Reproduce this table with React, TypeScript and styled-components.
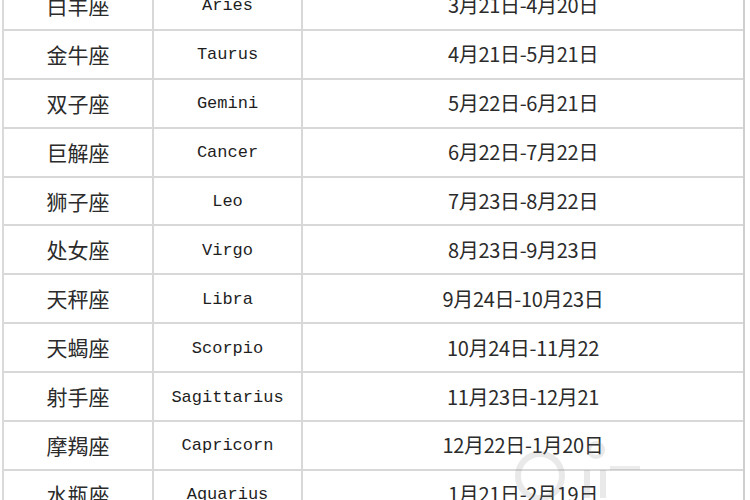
import styled, { createGlobalStyle } from "styled-components";

type Sign = {
  cn: string;
  en: string;
  dates: string;
};

const signs: Sign[] = [
  { cn: "白羊座", en: "Aries", dates: "3月21日-4月20日" },
  { cn: "金牛座", en: "Taurus", dates: "4月21日-5月21日" },
  { cn: "双子座", en: "Gemini", dates: "5月22日-6月21日" },
  { cn: "巨解座", en: "Cancer", dates: "6月22日-7月22日" },
  { cn: "狮子座", en: "Leo", dates: "7月23日-8月22日" },
  { cn: "处女座", en: "Virgo", dates: "8月23日-9月23日" },
  { cn: "天秤座", en: "Libra", dates: "9月24日-10月23日" },
  { cn: "天蝎座", en: "Scorpio", dates: "10月24日-11月22" },
  { cn: "射手座", en: "Sagittarius", dates: "11月23日-12月21" },
  { cn: "摩羯座", en: "Capricorn", dates: "12月22日-1月20日" },
  { cn: "水瓶座", en: "Aquarius", dates: "1月21日-2月19日" },
  { cn: "双鱼座", en: "Pisces", dates: "2月20日-3月20日" },
];

const GlobalStyle = createGlobalStyle`
  html, body {
    margin: 0;
    padding: 0;
    background: #ffffff;
    overflow: hidden;
  }
`;

const Page = styled.div`
  position: relative;
  width: 750px;
  height: 500px;
  overflow: hidden;
  background: #ffffff;
  padding-left: 2px;
  box-sizing: border-box;
`;

const Table = styled.div`
  margin-top: -18px;
  width: 743px;
  box-sizing: border-box;
  border-left: 2px solid #dadada;
  border-right: 2px solid #cfcfcf;
  display: flex;
  flex-direction: column;
`;

const Row = styled.div`
  display: grid;
  grid-template-columns: 150px 149px 1fr;
  height: 48.9px;
  box-sizing: border-box;
  border-bottom: 2px solid #d8d8d8;
`;

const Cell = styled.div<{ $kind: "cn" | "en" | "date"; $last?: boolean }>`
  display: flex;
  align-items: center;
  justify-content: center;
  box-sizing: border-box;
  border-right: ${(p) => (p.$last ? "none" : "2px solid #d8d8d8")};
  color: ${(p) => (p.$kind === "en" ? "#1e1e1e" : "#2b2b2b")};
  white-space: nowrap;
  font-family: ${(p) =>
    p.$kind === "en"
      ? '"Liberation Mono", "DejaVu Sans Mono", monospace'
      : '"Noto Sans CJK SC", "Noto Sans", sans-serif'};
  font-size: ${(p) => (p.$kind === "en" ? "17px" : p.$kind === "cn" ? "21px" : "20px")};
  letter-spacing: ${(p) => (p.$kind === "date" ? "-0.3px" : "0")};
  padding-top: ${(p) => (p.$kind === "en" ? "2px" : "0")};
  padding-bottom: 1px;
`;

const Watermark = styled.svg`
  position: absolute;
  left: 500px;
  top: 436px;
  width: 150px;
  height: 64px;
  opacity: 0.18;
  pointer-events: none;
`;

export default function App() {
  return (
    <>
      <GlobalStyle />
      <Page>
        <Table>
          {signs.map((s) => (
            <Row key={s.en}>
              <Cell $kind="cn">{s.cn}</Cell>
              <Cell $kind="en">{s.en}</Cell>
              <Cell $kind="date" $last>
                {s.dates}
              </Cell>
            </Row>
          ))}
        </Table>
        <Watermark viewBox="0 0 150 64">
          <circle cx="40" cy="40" r="22" fill="none" stroke="#888" strokeWidth="6" />
          <circle cx="96" cy="14" r="7" fill="none" stroke="#888" strokeWidth="4" />
          <rect x="84" y="34" width="6" height="28" fill="#888" />
          <rect x="100" y="34" width="6" height="28" fill="#888" />
          <rect x="110" y="30" width="30" height="4" fill="#999" />
        </Watermark>
      </Page>
    </>
  );
}
